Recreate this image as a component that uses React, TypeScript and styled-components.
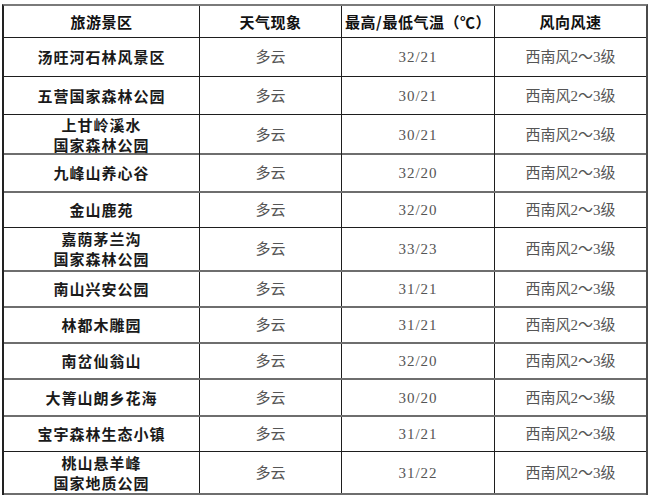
import React from "react";
import styled, { createGlobalStyle } from "styled-components";

const Global = createGlobalStyle`
  html, body { margin: 0; padding: 0; background: #ffffff; }
  body { font-family: "Noto Sans CJK SC", sans-serif; }
  *, *::before, *::after { box-sizing: border-box; }
`;

const Page = styled.div`
  padding: 4px 0 0 2px;
`;

const Table = styled.div`
  width: 646px;
  border-top: 2px solid #7a7a7a;
  border-left: 2px solid #222;
  border-right: 2px solid #4a4a4a;
  display: flex;
  flex-direction: column;
`;

const Row = styled.div<{ $h: number; $soft?: boolean }>`
  display: grid;
  grid-template-columns: 196px 142px 153px 151px;
  height: ${(p) => p.$h}px;
  border-bottom: ${(p) => (p.$soft ? "2px solid #6e6e6e" : "1px solid #1e1e1e")};
`;

const Cell = styled.div<{ $last?: boolean }>`
  display: flex;
  flex-direction: column;
  align-items: center;
  justify-content: center;
  border-right: ${(p) => (p.$last ? "none" : "1px solid #1e1e1e")};
  white-space: nowrap;
  font-size: 15px;
  line-height: 20px;
`;

const Head = styled(Cell)`
  font-family: "Noto Sans CJK SC", sans-serif;
  font-weight: 700;
  color: #111;
  letter-spacing: 0.5px;
`;

const NameCell = styled(Cell)`
  font-family: "Noto Sans CJK SC", sans-serif;
  font-weight: 700;
  color: #1a1a1a;
  letter-spacing: 1px;
`;

const NameLine = styled.div`
  line-height: 20px;
`;

const DataCell = styled(Cell)<{ $num?: boolean }>`
  font-family: "Liberation Serif", "Noto Sans CJK SC", serif;
  font-weight: 400;
  color: #555;
  letter-spacing: ${(p) => (p.$num ? "1px" : "0")};
`;

type Item = {
  name: string[];
  weather: string;
  temp: string;
  wind: string;
  h: number;
  soft?: boolean;
};

const items: Item[] = [
  { name: ["汤旺河石林风景区"], weather: "多云", temp: "32/21", wind: "西南风2～3级", h: 39 },
  { name: ["五营国家森林公园"], weather: "多云", temp: "30/21", wind: "西南风2～3级", h: 38 },
  { name: ["上甘岭溪水", "国家森林公园"], weather: "多云", temp: "30/21", wind: "西南风2～3级", h: 40, soft: true },
  { name: ["九峰山养心谷"], weather: "多云", temp: "32/20", wind: "西南风2～3级", h: 38, soft: true },
  { name: ["金山鹿苑"], weather: "多云", temp: "32/20", wind: "西南风2～3级", h: 35 },
  { name: ["嘉荫茅兰沟", "国家森林公园"], weather: "多云", temp: "33/23", wind: "西南风2～3级", h: 44, soft: true },
  { name: ["南山兴安公园"], weather: "多云", temp: "31/21", wind: "西南风2～3级", h: 36, soft: true },
  { name: ["林都木雕园"], weather: "多云", temp: "31/21", wind: "西南风2～3级", h: 36, soft: true },
  { name: ["南岔仙翁山"], weather: "多云", temp: "32/20", wind: "西南风2～3级", h: 36, soft: true },
  { name: ["大箐山朗乡花海"], weather: "多云", temp: "30/20", wind: "西南风2～3级", h: 37, soft: true },
  { name: ["宝宇森林生态小镇"], weather: "多云", temp: "31/21", wind: "西南风2～3级", h: 35 },
  { name: ["桃山悬羊峰", "国家地质公园"], weather: "多云", temp: "31/22", wind: "西南风2～3级", h: 43, soft: true },
];

export default function App() {
  return (
    <>
      <Global />
      <Page>
        <Table>
          <Row $h={32}>
            <Head>旅游景区</Head>
            <Head>天气现象</Head>
            <Head>最高/最低气温（℃）</Head>
            <Head $last>风向风速</Head>
          </Row>
          {items.map((it, i) => (
            <Row key={i} $h={it.h} $soft={it.soft}>
              <NameCell>
                {it.name.map((n, j) => (
                  <NameLine key={j}>{n}</NameLine>
                ))}
              </NameCell>
              <DataCell>{it.weather}</DataCell>
              <DataCell $num>{it.temp}</DataCell>
              <DataCell $last>{it.wind}</DataCell>
            </Row>
          ))}
        </Table>
      </Page>
    </>
  );
}
